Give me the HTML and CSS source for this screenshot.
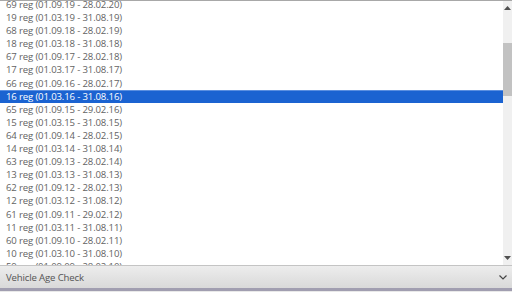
FILE: index.html
```html
<!DOCTYPE html>
<html>
<head>
<meta charset="utf-8">
<link rel="stylesheet" href="styles.css">
</head>
<body>
<div class="page">
  <div class="listbox">
    <ul class="options">
      <li>69 reg (01.09.19 - 28.02.20)</li>
      <li>19 reg (01.03.19 - 31.08.19)</li>
      <li>68 reg (01.09.18 - 28.02.19)</li>
      <li>18 reg (01.03.18 - 31.08.18)</li>
      <li>67 reg (01.09.17 - 28.02.18)</li>
      <li>17 reg (01.03.17 - 31.08.17)</li>
      <li>66 reg (01.09.16 - 28.02.17)</li>
      <li class="selected">16 reg (01.03.16 - 31.08.16)</li>
      <li>65 reg (01.09.15 - 29.02.16)</li>
      <li>15 reg (01.03.15 - 31.08.15)</li>
      <li>64 reg (01.09.14 - 28.02.15)</li>
      <li>14 reg (01.03.14 - 31.08.14)</li>
      <li>63 reg (01.09.13 - 28.02.14)</li>
      <li>13 reg (01.03.13 - 31.08.13)</li>
      <li>62 reg (01.09.12 - 28.02.13)</li>
      <li>12 reg (01.03.12 - 31.08.12)</li>
      <li>61 reg (01.09.11 - 29.02.12)</li>
      <li>11 reg (01.03.11 - 31.08.11)</li>
      <li>60 reg (01.09.10 - 28.02.11)</li>
      <li>10 reg (01.03.10 - 31.08.10)</li>
      <li>59 reg (01.09.09 - 28.02.10)</li>
    </ul>
    <div class="scrollbar">
      <div class="sb-btn up"><svg width="7" height="4" viewBox="0 0 7 4"><path d="M0 4 L3.5 0 L7 4 Z" fill="#505050"/></svg></div>
      <div class="sb-gap"></div>
      <div class="sb-thumb"></div>
      <div class="sb-track"></div>
      <div class="sb-btn down"><svg width="7" height="4" viewBox="0 0 7 4"><path d="M0 0 L3.5 4 L7 0 Z" fill="#505050"/></svg></div>
    </div>
  </div>
  <div class="select">
    <span class="select-label">Vehicle Age Check</span>
    <svg class="chevron" width="8" height="5" viewBox="0 0 8 5"><path d="M0.5 0.5 L4 4 L7.5 0.5" fill="none" stroke="#444" stroke-width="1.2"/></svg>
  </div>
  <div class="band"></div>
</div>
</body>
</html>
```

FILE: styles.css
```css
html, body {
  margin: 0;
  padding: 0;
  background: #e9e9e9;
}
.page {
  width: 512px;
  height: 292px;
  display: flex;
  flex-direction: column;
  overflow: hidden;
  font-family: "Open Sans", "Noto Sans", sans-serif;
}
.listbox {
  height: 264px;
  border-top: 1px solid #a8a8a8;
  background: #fff;
  display: flex;
  overflow: hidden;
}
.options {
  list-style: none;
  margin: -3px 0 0 0;
  padding: 0;
  flex: 1;
}
.options li {
  height: 13.1px;
  line-height: 13.1px;
  font-size: 9.6px;
  letter-spacing: -0.15px;
  color: #636363;
  padding-left: 6px;
  white-space: nowrap;
}
.options li.selected {
  background: #1b63d1;
  color: #fff;
  box-shadow: inset 0 1px 0 #5b8fe0;
}
.scrollbar {
  width: 9px;
  background: #f0f0f0;
  display: flex;
  flex-direction: column;
  align-items: stretch;
}
.sb-btn {
  height: 14px;
  display: flex;
  align-items: center;
  justify-content: center;
}
.sb-btn svg { display: block; }
.sb-gap { height: 28px; }
.sb-thumb {
  height: 53px;
  background: #c2c2c2;
}
.sb-track { flex: 1; }
.select {
  height: 22px;
  border-top: 1px solid #c4c4c4;
  background: linear-gradient(#ededed, #d9d9d9);
  display: flex;
  align-items: center;
  justify-content: space-between;
  padding: 0 5px 0 6px;
}
.select-label {
  font-size: 9.6px;
  letter-spacing: -0.15px;
  color: #555;
}
.chevron { display: block; }
.band {
  height: 3px;
  background: #a19eb0;
}
```
